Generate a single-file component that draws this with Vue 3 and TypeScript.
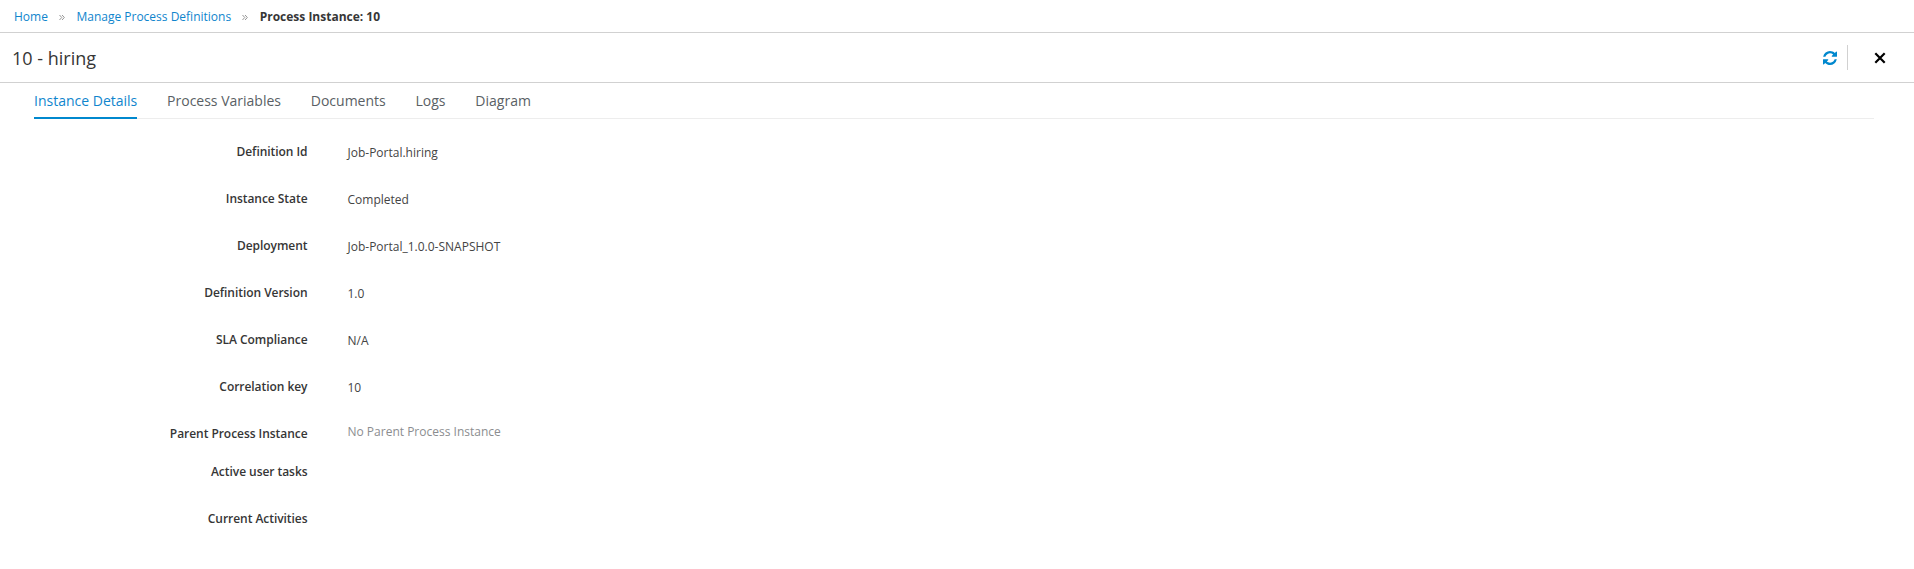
<script setup lang="ts">
interface Field { label: string; value: string; kind?: string }
const tabs: string[] = ['Instance Details', 'Process Variables', 'Documents', 'Logs', 'Diagram']
const fields: Field[] = [
  { label: 'Definition Id', value: 'Job-Portal.hiring' },
  { label: 'Instance State', value: 'Completed' },
  { label: 'Deployment', value: 'Job-Portal_1.0.0-SNAPSHOT' },
  { label: 'Definition Version', value: '1.0' },
  { label: 'SLA Compliance', value: 'N/A' },
  { label: 'Correlation key', value: '10' },
  { label: 'Parent Process Instance', value: 'No Parent Process Instance', kind: 'muted' },
  { label: 'Active user tasks', value: '' },
  { label: 'Current Activities', value: '' },
]
</script>

<template>
  <div class="page">
    <nav class="crumbs">
      <a>Home</a>
      <svg class="sep" viewBox="0 0 7 7"><path d="M.6 .6 3.2 3.5 .6 6.4M3.6 .6 6.2 3.5 3.6 6.4" /></svg>
      <a>Manage Process Definitions</a>
      <svg class="sep" viewBox="0 0 7 7"><path d="M.6 .6 3.2 3.5 .6 6.4M3.6 .6 6.2 3.5 3.6 6.4" /></svg>
      <strong>Process Instance: 10</strong>
    </nav>
    <header class="head">
      <h1>10 - hiring</h1>
      <button class="refresh" aria-label="Refresh">
        <svg viewBox="0 0 1536 1536"><path d="M1511 928q0 5-1 7-64 268-268 434.500T764 1536q-146 0-282.500-55T238 1324l-129 129q-19 19-45 19t-45-19-19-45V960q0-26 19-45t45-19h448q26 0 45 19t19 45-19 45l-137 137q71 66 161 102t187 36q134 0 250-65t186-179q11-17 53-117 8-23 30-23h192q13 0 22.500 9.500t9.500 22.500zm25-800v448q0 26-19 45t-45 19h-448q-26 0-45-19t-19-45 19-45l138-138Q969 256 768 256q-134 0-250 65T332 500q-11 17-53 117-8 23-30 23H50q-13 0-22.500-9.500T18 608v-7q65-268 270-434.500T768 0q146 0 284 55.500T1297 212l130-129q19-19 45-19t45 19 19 45z" /></svg>
      </button>
      <span class="divider"></span>
      <button class="close" aria-label="Close">
        <svg viewBox="0 0 12 12"><path d="M1.300 1.300 10.700 10.700M10.700 1.300 1.300 10.700" /></svg>
      </button>
    </header>
    <ul class="tabs">
      <li v-for="(t, i) in tabs" :key="t" :class="{ active: i === 0 }">{{ t }}</li>
    </ul>
    <dl class="fields">
      <div v-for="f in fields" :key="f.label" class="row" :class="f.kind">
        <dt>{{ f.label }}</dt>
        <dd>{{ f.value }}</dd>
      </div>
    </dl>
  </div>
</template>

<style>
body { margin: 0; background: #fff; }
</style>
<style scoped>
.page { height: 569px; overflow: hidden; font: 12px/20px "Open Sans", sans-serif; color: #363636; box-sizing: border-box; }
.crumbs { display: flex; align-items: center; height: 33px; padding: 2px 0 0 14px; box-sizing: border-box; border-bottom: 1px solid #d1d1d1; }
.crumbs a { color: #0f85cd; }
.crumbs strong { font-weight: 700; }
.sep { flex-shrink: 0; width: 6px; height: 7px; margin: 1px 11.500px 0 11px; fill: none; stroke: #8f8f8f; stroke-width: 1.1; }
.head { display: flex; align-items: center; height: 49px; padding: 0 28px 0 12px; border-bottom: 1px solid #d1d1d1; }
h1 { margin: 0 auto 0 0; font-size: 18px; font-weight: 400; }
button { display: flex; padding: 0; border: 0; background: none; }
.refresh svg { width: 14px; height: 14px; fill: #0088ce; }
.divider { width: 1px; height: 25px; margin: 0 26px 0 10px; background: #d1d1d1; }
.close svg { width: 12px; height: 12px; stroke: #000; stroke-width: 2.2; }
.tabs { display: flex; gap: 29.800px; margin: 0 40px 0 34px; padding: 0; height: 35px; list-style: none; border-bottom: 1px solid #ededed; }
.tabs li { height: 34px; font-size: 14px; line-height: 36px; color: #5a5f65; border-bottom: 2px solid transparent; }
.tabs .active { color: #0f85cd; border-color: #0088ce; }
.fields { margin: 18px 0 0; }
.row { display: grid; grid-template-columns: 307.500px 1fr; column-gap: 40px; height: 47px; line-height: 30px; }
dt { text-align: right; font-weight: 600; letter-spacing: -0.050px; }
dd { margin: 1px 0 0; color: #444; }
.muted { height: 38px; }
.muted dd { margin-top: -2px; color: #8b8d8f; }
</style>
